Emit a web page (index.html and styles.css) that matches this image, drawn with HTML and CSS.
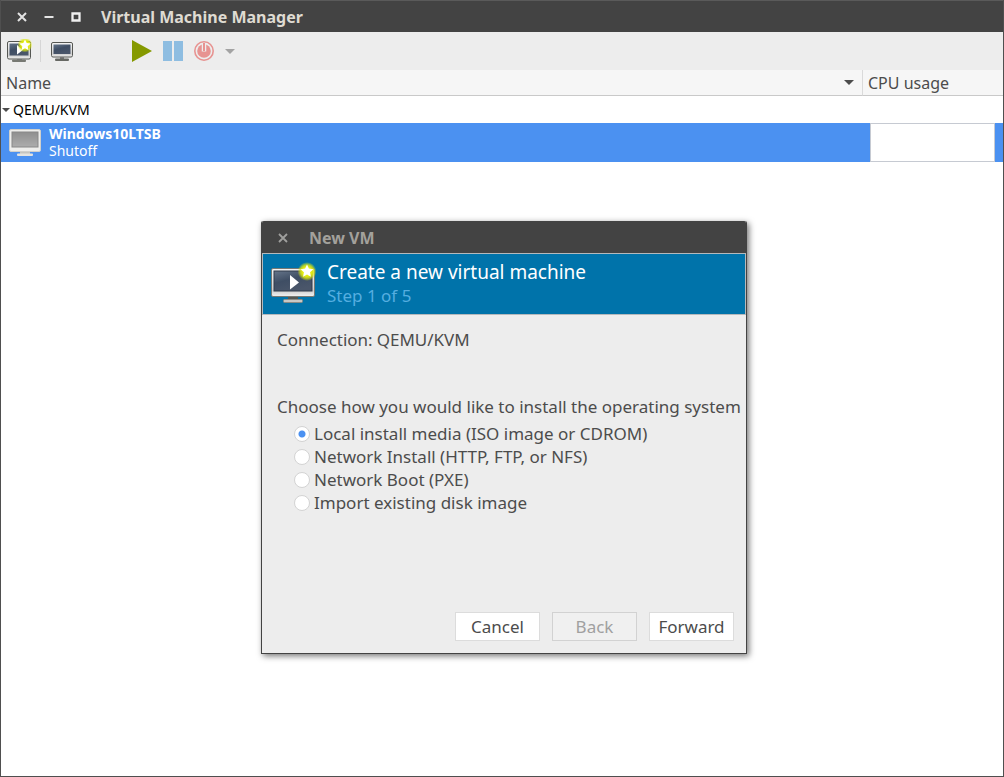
FILE: index.html
```html
<!DOCTYPE html>
<html lang="en">
<head>
<meta charset="utf-8">
<title>Virtual Machine Manager</title>
<link rel="stylesheet" href="styles.css">
</head>
<body>
<svg class="defs" aria-hidden="true">
  <defs>
    <linearGradient id="frame" x1="0" y1="0" x2="0" y2="1">
      <stop offset="0" stop-color="#f4f4f4"/><stop offset="0.8" stop-color="#d0d0d0"/><stop offset="1" stop-color="#f2f2f2"/>
    </linearGradient>
    <linearGradient id="screen" x1="0" y1="0" x2="0.5" y2="1">
      <stop offset="0" stop-color="#65758a"/><stop offset="0.5" stop-color="#3f4e64"/><stop offset="1" stop-color="#4a566a"/>
    </linearGradient>
    <linearGradient id="off" x1="0" y1="0" x2="0" y2="1">
      <stop offset="0" stop-color="#8f8f8f"/><stop offset="1" stop-color="#adadad"/>
    </linearGradient>
    <radialGradient id="glow">
      <stop offset="0.5" stop-color="#e4ec10"/><stop offset="0.7" stop-color="#dbe710" stop-opacity="0.8"/><stop offset="1" stop-color="#dbe710" stop-opacity="0"/>
    </radialGradient>
  </defs>
</svg>
<div class="window">
  <header class="titlebar">
    <button class="wm" aria-label="Close"><svg width="10" height="10"><path d="M1 1l8 8M9 1l-8 8" stroke="#e4e4e4" stroke-width="2"/></svg></button>
    <button class="wm" aria-label="Minimize"><svg width="10" height="10"><path d="M0.500 5h9" stroke="#e4e4e4" stroke-width="2"/></svg></button>
    <button class="wm" aria-label="Maximize"><svg width="10" height="10"><path d="M1.500 1.500h7v7h-7z" fill="none" stroke="#efefef" stroke-width="2.300"/></svg></button>
    <h1 class="title">Virtual Machine Manager</h1>
  </header>

  <div class="toolbar">
    <button class="tool tool-new" aria-label="New virtual machine">
      <svg width="26" height="24" viewBox="0 0 26 24">
        <rect x="1.500" y="2.500" width="23" height="17.500" rx="1.500" fill="url(#frame)" stroke="#555753"/>
        <rect x="3.500" y="4.500" width="19" height="12" fill="url(#screen)"/>
        <path d="M11 20h5v2h-5z" fill="#777"/><rect x="6" y="20.500" width="14" height="2.500" rx="1" fill="#777973"/>
        <path d="M11 6l6 5-6 4.500z" fill="#fff"/>
        <circle cx="19" cy="6" r="7.500" fill="url(#glow)"/>
        <path d="M19 0.500l1.700 3.600 4 .5-3 2.700.8 4-3.500-2-3.500 2 .8-4-3-2.700 4-.5z" fill="#fff"/>
      </svg>
    </button>
    <span class="separator"></span>
    <button class="tool tool-open" aria-label="Open">
      <svg width="24" height="22" viewBox="0 0 24 22">
        <rect x="1.500" y="2.500" width="21" height="14.500" rx="1.500" fill="url(#frame)" stroke="#555753"/>
        <rect x="3.500" y="4.500" width="17" height="9.500" fill="url(#screen)"/>
        <path d="M10 17h4v3h-4z" fill="#777"/><rect x="5" y="18.500" width="14" height="2.500" rx="1" fill="#666863"/>
      </svg>
    </button>
    <button class="tool tool-run" aria-label="Run"><svg width="20" height="22"><path d="M0 0l20 11L0 22z" fill="#859900"/></svg></button>
    <button class="tool" aria-label="Pause"><svg width="20" height="20"><path d="M0 0h9v20H0zM11 0h9v20h-9z" fill="#8ebde1"/></svg></button>
    <button class="tool" aria-label="Shut down"><svg width="20" height="20" viewBox="0 0 20 20"><circle cx="10" cy="10" r="9.200" fill="none" stroke="#e79391" stroke-width="1.600"/><circle cx="10" cy="10" r="6.800" fill="#e79391"/><path d="M10 3V10.500" stroke="#ededed" stroke-width="4.500"/><path d="M10 2v8" stroke="#e79391" stroke-width="2"/></svg></button>
    <button class="tool" aria-label="Shut down options"><svg width="10" height="5"><path d="M0 0h10L5 5z" fill="#a3a3a3"/></svg></button>
  </div>

  <table class="machines">
    <thead>
      <tr>
        <th class="col-name"><span class="heading">Name <svg width="10" height="5"><path d="M0 0h10L5 5z" fill="#4c4c4c"/></svg></span></th>
        <th class="col-cpu">CPU usage</th>
      </tr>
    </thead>
    <tbody>
      <tr class="group">
        <td colspan="2"><span class="connection"><svg width="8" height="4"><path d="M0 0h8L4 4z" fill="#4c4c4c"/></svg>QEMU/KVM</span></td>
      </tr>
      <tr class="selected">
        <td>
          <div class="machine">
            <svg width="32" height="28" viewBox="0 0 32 28">
              <rect x="0.500" y="0.500" width="31" height="22" rx="1.500" fill="#eeeeec" stroke="#d0d0cc"/>
              <rect x="3" y="3" width="26" height="15" fill="url(#off)" stroke="#888"/>
              <path d="M11 23h10v2H11z" fill="#c4c4c0"/><rect x="8" y="24.500" width="16" height="2.500" rx="1" fill="#e3e3e0"/>
            </svg>
            <div class="machine-text"><strong>Windows10LTSB</strong><span>Shutoff</span></div>
          </div>
        </td>
        <td class="cpu"><div class="graph"></div></td>
      </tr>
    </tbody>
  </table>
</div>

<section class="dialog" role="dialog" aria-labelledby="dialog-title">
  <header class="titlebar dialog-bar">
    <button class="wm" aria-label="Close dialog"><svg width="10" height="10"><path d="M1 1l8 8M9 1l-8 8" stroke="#a0a09e" stroke-width="1.800"/></svg></button>
    <h2 class="title" id="dialog-title">New VM</h2>
  </header>
  <div class="banner">
    <svg width="46" height="42" viewBox="0 0 46 42">
      <rect x="0.500" y="6.500" width="43" height="28" rx="1.500" fill="url(#frame)" stroke="#777973"/>
      <rect x="3" y="9" width="38" height="20" fill="url(#screen)" stroke="#303a4a"/>
      <path d="M17 35h10v3H17z" fill="#555753"/><rect x="12.500" y="37.500" width="19" height="3" rx="1" fill="#c8c8c5" stroke="#888a85"/>
      <path d="M19 13l9 7.500-9 7z" fill="#fff"/>
      <circle cx="36" cy="9.500" r="9.500" fill="url(#glow)"/>
      <path d="M36 2.500l1.900 4.100 4.500.6-3.300 3.100.8 4.500-3.900-2.200-3.900 2.200.8-4.500-3.300-3.100 4.500-.6z" fill="#fff"/>
    </svg>
    <div>
      <h3 class="banner-title">Create a new virtual machine</h3>
      <p class="step">Step 1 of 5</p>
    </div>
  </div>
  <form class="content">
    <p class="connection-line"><span>Connection:</span><span>QEMU/KVM</span></p>
    <fieldset>
      <legend>Choose how you would like to install the operating system</legend>
      <label><input type="radio" name="source" checked>Local install media (ISO image or CDROM)</label>
      <label><input type="radio" name="source">Network Install (HTTP, FTP, or NFS)</label>
      <label><input type="radio" name="source">Network Boot (PXE)</label>
      <label><input type="radio" name="source">Import existing disk image</label>
    </fieldset>
    <div class="actions">
      <button type="button">Cancel</button>
      <button type="button" disabled>Back</button>
      <button type="button">Forward</button>
    </div>
  </form>
</section>
</body>
</html>
```

FILE: styles.css
```css
* { box-sizing: border-box; }
body {
  margin: 0;
  background: #fff;
  color: #4c4c4c;
  font: 16px/24px "Noto Sans", "Open Sans", sans-serif;
}
svg { display: block; flex: none; }
h1, h2, h3, p { margin: 0; }
button { font: inherit; color: inherit; }
.defs { position: absolute; width: 0; height: 0; }

.window {
  min-height: 100vh;
  border: 1px solid #4f4f4f;
  border-top: 0;
  background: #fff;
}
.titlebar {
  display: flex;
  align-items: center;
  height: 32px;
  padding: 0 16px;
  gap: 17px;
  background: #434343;
  border-top: 1px solid #5a5a5a;
}
.wm, .tool { padding: 0; border: 0; background: none; }
.title { padding-left: 3px; font-size: 16px; line-height: 24px; color: #dfdbd2; }

.toolbar {
  display: flex;
  align-items: center;
  height: 38px;
  padding: 0 5px;
  gap: 11px;
  background: #ededed;
}
.separator { width: 1px; height: 22px; margin-left: -3px; background: #d6d6d6; }
.tool-open { margin-left: -2px; }
.tool-run { margin-left: 47px; }

.machines { width: 100%; border-spacing: 0; table-layout: fixed; }
.machines th {
  height: 26px;
  padding: 0 5px;
  background: #f6f6f6;
  border-bottom: 1px solid #c9c9c9;
  font-weight: normal;
  text-align: left;
}
.machines .col-cpu { width: 141px; border-left: 1px solid #dadada; }
.heading { display: flex; align-items: center; justify-content: space-between; padding-right: 3px; }
.machines td { padding: 0; }
.group { height: 27px; color: #000; font-size: 14px; line-height: 20px; }
.connection { display: flex; align-items: center; gap: 3px; padding-left: 1px; }
.selected { height: 39px; background: #4b91f1; color: #fff; font-size: 14px; line-height: 17px; }
.machine { display: flex; align-items: center; gap: 8px; padding-left: 8px; }
.machine-text { padding-bottom: 2px; }
.machine strong, .machine span { display: block; }
.machines .cpu { padding: 0 8px; }
.graph { height: 39px; border: 1px solid #c6cad2; background: #fff; }

.dialog {
  position: absolute;
  left: 261px;
  top: 221px;
  display: flex;
  flex-direction: column;
  width: 486px;
  min-height: 433px;
  border: 1px solid #434343;
  border-top: 0;
  border-radius: 2px 2px 0 0;
  background: #ededed;
  box-shadow: 2px 2px 6px rgba(0, 0, 0, 0.55);
}
.dialog-bar { gap: 18px; border-radius: 2px 2px 0 0; border-top-color: #434343; }
.dialog-bar .title { color: #a3a19c; }
.banner {
  display: flex;
  align-items: center;
  gap: 10px;
  height: 62px;
  padding: 0 8px 3px;
  border: 1px solid #b5b9bc;
  background: #0073aa;
}
.banner-title { color: #fff; font-size: 19px; font-weight: normal; line-height: 26px; }
.step { color: #55aee0; font-size: 17px; line-height: 22px; }
.content {
  display: flex;
  flex: 1;
  flex-direction: column;
  padding: 13px 12px 12px 15px;
  font-size: 17px;
}
.connection-line { display: flex; gap: 4px; }
fieldset { min-width: 0; margin: 43px 0 0; padding: 0; border: 0; }
legend { padding: 0; margin-bottom: 3px; white-space: nowrap; }
fieldset label { display: flex; align-items: center; gap: 4px; height: 23px; padding-left: 17px; }
input {
  appearance: none;
  width: 16px;
  height: 16px;
  margin: 0;
  border: 1px solid #d3d3d3;
  border-radius: 50%;
  background: #fff;
}
input:checked { background: radial-gradient(circle, #4b91f1 3px, #fff 4px); }
.actions { display: flex; justify-content: flex-end; gap: 12px; margin-top: auto; }
.actions button {
  width: 85px;
  height: 29px;
  padding: 0;
  border: 1px solid #dcdcdc;
  background: #fff;
}
.actions button:disabled { border-color: #d2d2d2; background: #f0f0f0; color: #a0a0a0; }
```
